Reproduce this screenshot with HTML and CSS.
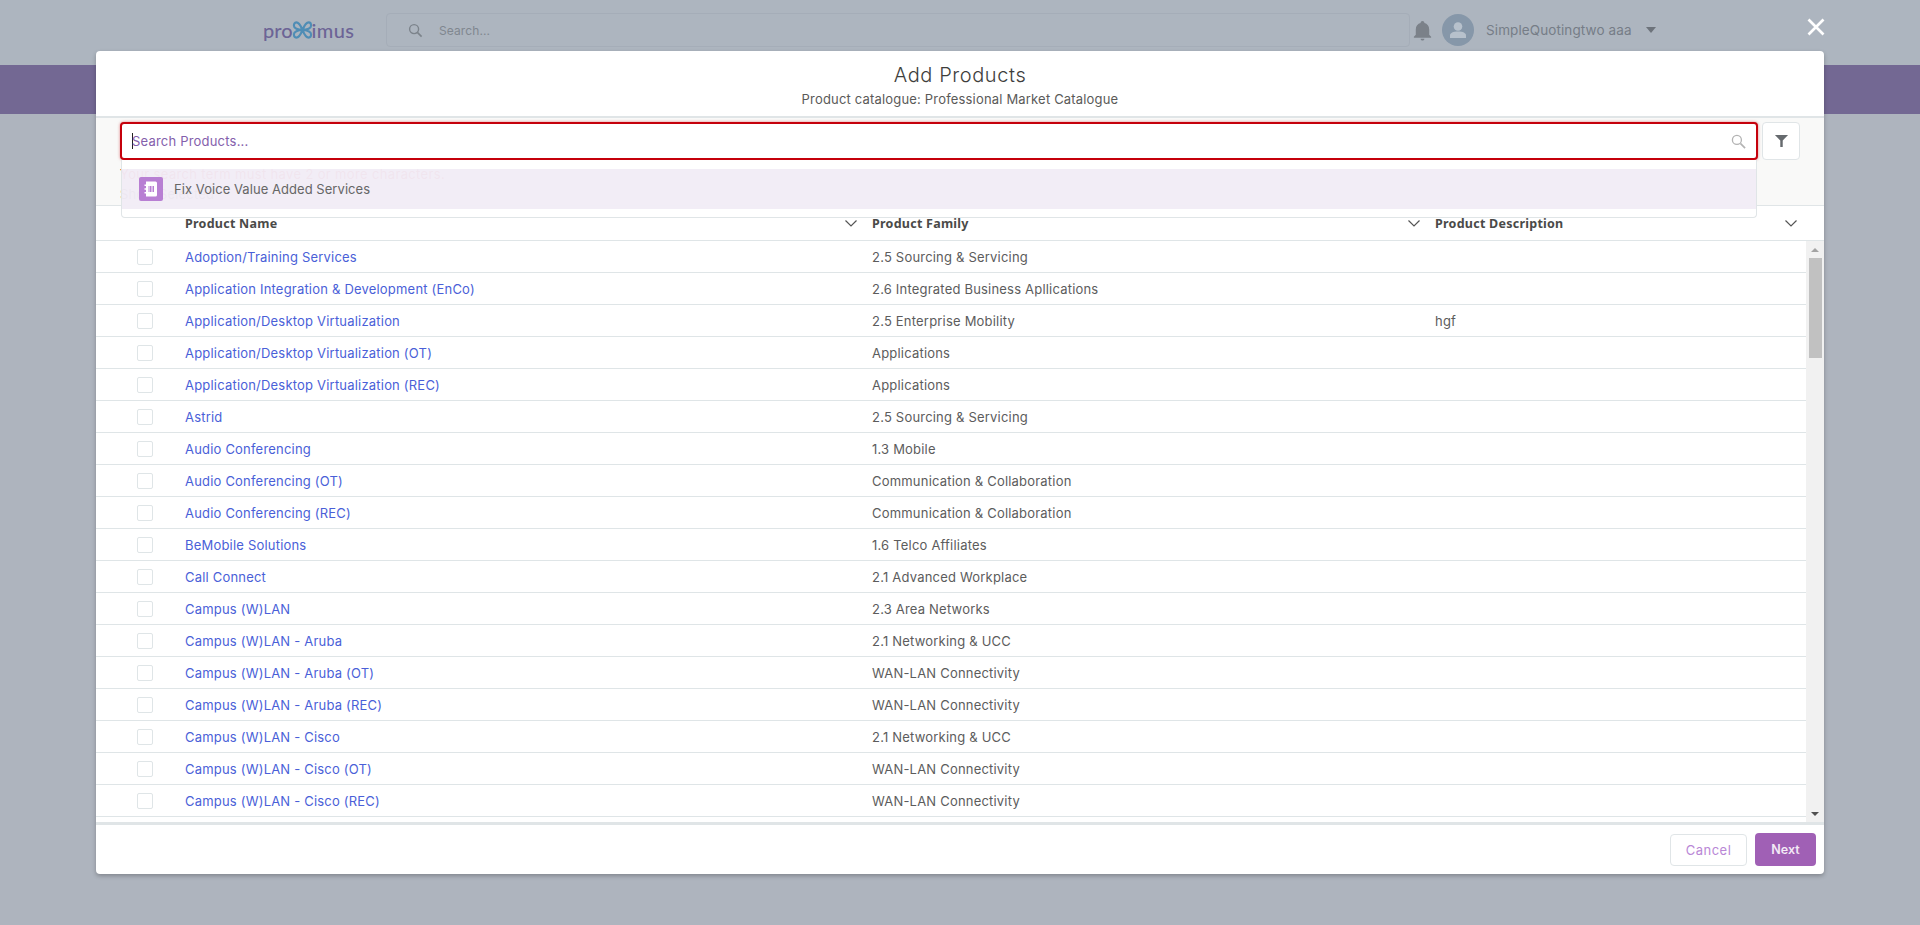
FILE: index.html
```html
<!DOCTYPE html>
<html lang="en">
<head>
<meta charset="utf-8">
<title>Add Products</title>
<link rel="stylesheet" href="styles.css">
</head>
<body>
<header class="topbar">
  <div class="logo">
    <span>pro</span>
    <svg class="logo-x" viewBox="0 0 22 20" width="21" height="20"><path d="M11 10C9 5 7 2 4.500 2 2.500 2 2 4 2 5.500 2 8 6 10 11 10c5 0 9 2 9 4.500 0 2-1 3.500-2.500 3.500C15 18 13 15 11 10zM11 10c2-5 4-8 6.500-8C19 2 20 3.500 20 5.500 20 8 16 10 11 10c-5 0-9 2-9 4.500C2 16.500 3 18 4.500 18 7 18 9 15 11 10z" fill="none" stroke="#4f8db5" stroke-width="2.200"/></svg>
    <span class="logo-end">imus</span>
  </div>
  <div class="global-search">
    <svg class="gs-icon" viewBox="0 0 16 16" width="15" height="15"><circle cx="6.500" cy="6.500" r="4.800" fill="none" stroke="#7c838b" stroke-width="1.500"/><path d="M10 10l4.500 4.500" stroke="#7c838b" stroke-width="1.800" fill="none"/></svg>
    <span>Search...</span>
  </div>
  <svg class="bell" viewBox="0 0 24 24" width="23" height="23"><path d="M12 22.500c1.100 0 2-.9 2-2h-4c0 1.100.9 2 2 2zm7-6v-5.500c0-3.500-2-6-5-6.700V4c0-1.100-.9-2-2-2s-2 .9-2 2v.3c-3 .7-5 3.200-5 6.700v5.500L3 18.500v1h18v-1l-2-2z" fill="#7b8189"/></svg>
  <svg class="avatar" viewBox="0 0 32 32" width="32" height="32"><circle cx="16" cy="16" r="16" fill="#8697a9"/><circle cx="16" cy="12.500" r="4.300" fill="#b7c1cc"/><path d="M8 21.500c0-2.500 3-4 8-4s8 1.500 8 4V24H8z" fill="#b7c1cc"/></svg>
  <span class="user">SimpleQuotingtwo aaa</span>
  <span class="user-caret"></span>
</header>
<div class="band"></div>

<button class="close" aria-label="Close">
  <svg viewBox="0 0 18 18" width="18" height="18"><path d="M1.500 1.500l15 15M16.500 1.500l-15 15" stroke="#fff" stroke-width="2.700" fill="none"/></svg>
</button>

<main class="modal">
  <div class="modal-head">
    <h1>Add Products</h1>
    <p>Product catalogue: Professional Market Catalogue</p>
  </div>
  <div class="toolbar">
    <div class="search-row">
      <div class="product-search">
        <i class="caret"></i>
        <input type="text" placeholder="Search Products...">
        <svg viewBox="0 0 16 16" width="15" height="15"><circle cx="6.300" cy="6.300" r="4.800" fill="none" stroke="#b3b3b3" stroke-width="1.400"/><path d="M10 10l5 5" stroke="#b3b3b3" stroke-width="1.800" fill="none"/></svg>
      </div>
      <button class="filter" aria-label="Filter">
        <svg viewBox="0 0 16 14" width="15" height="14"><path d="M1 .5h14L9.300 6.500V13.500H6.700V6.500z" fill="#666a6e"/></svg>
      </button>
    </div>
    <p class="ghost-error">Your search term must have 2 or more characters.</p>
    <p class="ghost-note">Show Selected</p>
    <div class="dropdown">
      <div class="option">
        <svg class="opt-icon" viewBox="0 0 24 24" width="24" height="24"><rect width="24" height="24" rx="2" fill="#b87fd3"/><path d="M7 4.500h9.500A1.500 1.500 0 0 1 18 6v12a1.500 1.500 0 0 1-1.500 1.500H7zM5.500 7.500h2v1.500h-2zM5.500 11.300h2v1.500h-2zM5.500 15h2v1.500h-2z" fill="#fff"/><path d="M10 9v6M11.500 9v6M13 9v6M14.500 9v6" stroke="#b87fd3" fill="none"/></svg>
        <span>Fix Voice Value Added Services</span>
      </div>
    </div>
  </div>
  <div class="grid-head">
    <div></div>
    <div class="th"><span>Product Name</span><svg viewBox="0 0 12 7" width="12" height="7"><path d="M.5.500L6 6l5.500-5.500" fill="none" stroke="#555" stroke-width="1.200"/></svg></div>
    <div class="th"><span>Product Family</span><svg viewBox="0 0 12 7" width="12" height="7"><path d="M.5.500L6 6l5.500-5.500" fill="none" stroke="#555" stroke-width="1.200"/></svg></div>
    <div class="th th-last"><span>Product Description</span><svg viewBox="0 0 12 7" width="12" height="7"><path d="M.5.500L6 6l5.500-5.500" fill="none" stroke="#555" stroke-width="1.200"/></svg></div>
  </div>
  <div class="grid-body">
    <div class="rows">
      <div class="row"><i class="check"></i><a>Adoption/Training Services</a><span>2.5 Sourcing &amp; Servicing</span><span></span></div>
      <div class="row"><i class="check"></i><a>Application Integration &amp; Development (EnCo)</a><span>2.6 Integrated Business Apllications</span><span></span></div>
      <div class="row"><i class="check"></i><a>Application/Desktop Virtualization</a><span>2.5 Enterprise Mobility</span><span>hgf</span></div>
      <div class="row"><i class="check"></i><a>Application/Desktop Virtualization (OT)</a><span>Applications</span><span></span></div>
      <div class="row"><i class="check"></i><a>Application/Desktop Virtualization (REC)</a><span>Applications</span><span></span></div>
      <div class="row"><i class="check"></i><a>Astrid</a><span>2.5 Sourcing &amp; Servicing</span><span></span></div>
      <div class="row"><i class="check"></i><a>Audio Conferencing</a><span>1.3 Mobile</span><span></span></div>
      <div class="row"><i class="check"></i><a>Audio Conferencing (OT)</a><span>Communication &amp; Collaboration</span><span></span></div>
      <div class="row"><i class="check"></i><a>Audio Conferencing (REC)</a><span>Communication &amp; Collaboration</span><span></span></div>
      <div class="row"><i class="check"></i><a>BeMobile Solutions</a><span>1.6 Telco Affiliates</span><span></span></div>
      <div class="row"><i class="check"></i><a>Call Connect</a><span>2.1 Advanced Workplace</span><span></span></div>
      <div class="row"><i class="check"></i><a>Campus (W)LAN</a><span>2.3 Area Networks</span><span></span></div>
      <div class="row"><i class="check"></i><a>Campus (W)LAN - Aruba</a><span>2.1 Networking &amp; UCC</span><span></span></div>
      <div class="row"><i class="check"></i><a>Campus (W)LAN - Aruba (OT)</a><span>WAN-LAN Connectivity</span><span></span></div>
      <div class="row"><i class="check"></i><a>Campus (W)LAN - Aruba (REC)</a><span>WAN-LAN Connectivity</span><span></span></div>
      <div class="row"><i class="check"></i><a>Campus (W)LAN - Cisco</a><span>2.1 Networking &amp; UCC</span><span></span></div>
      <div class="row"><i class="check"></i><a>Campus (W)LAN - Cisco (OT)</a><span>WAN-LAN Connectivity</span><span></span></div>
      <div class="row"><i class="check"></i><a>Campus (W)LAN - Cisco (REC)</a><span>WAN-LAN Connectivity</span><span></span></div>
    </div>
    <div class="scrollbar">
      <i class="arrow-up"></i>
      <i class="thumb"></i>
      <i class="arrow-down"></i>
    </div>
  </div>
  <div class="modal-foot">
    <button class="btn-cancel">Cancel</button>
    <button class="btn-next">Next</button>
  </div>
</main>
</body>
</html>
```
FILE: styles.css
```css
* { box-sizing: border-box; }
html, body { height: 100%; }
body {
  margin: 0;
  height: 925px;
  overflow: hidden;
  background: #aeb4be;
  font-family: Inter, "Open Sans", sans-serif;
  font-size: 13px;
  letter-spacing: .2px;
  color: #5c5c5c;
}
i { display: block; }
button { font-family: inherit; cursor: pointer; }

.topbar {
  height: 65px;
  display: flex;
  align-items: center;
  padding: 0 0 5px 263px;
  background: #adb5bf;
}
.logo {
  width: 123px;
  display: flex;
  align-items: center;
  font-family: Lato, sans-serif;
  font-size: 20px;
  font-weight: 500;
  letter-spacing: 0;
  color: #6c6496;
  line-height: 20px;
}
.logo-x { margin: 0 -1px; }
.logo-end { letter-spacing: .4px; }
.global-search {
  width: 1024px;
  height: 34px;
  display: flex;
  align-items: center;
  gap: 16px;
  padding-left: 21px;
  border: 1px solid #a5adb8;
  border-radius: 4px;
  background: #adb5bf;
  font-size: 12px;
  letter-spacing: .1px;
  color: #80878f;
}
.bell { margin-left: 1px; }
.avatar { margin-left: 8px; }
.user { margin-left: 12px; width: 160px; font-size: 13.500px; letter-spacing: .1px; color: #767d87; }
.user-caret {
  width: 0;
  height: 0;
  border-left: 5px solid transparent;
  border-right: 5px solid transparent;
  border-top: 6px solid #6d737b;
}
.band { height: 49px; background: #736893; }

.close {
  position: absolute;
  left: 1807px;
  top: 18px;
  padding: 0;
  border: 0;
  background: none;
  line-height: 0;
}

.modal {
  position: absolute;
  left: 96px;
  top: 51px;
  width: 1728px;
  height: 823px;
  display: flex;
  flex-direction: column;
  background: #fff;
  border-radius: 4px;
  box-shadow: 0 2px 4px rgba(0, 0, 0, .25);
}
.modal-head {
  height: 67px;
  flex: none;
  padding-top: 12px;
  text-align: center;
  border-bottom: 2px solid #e0e5e7;
}
.modal-head h1 {
  margin: 0;
  font-size: 20px;
  font-weight: 300;
  letter-spacing: .6px;
  line-height: 24px;
  color: #3e3e3c;
}
.modal-head p {
  margin: 3px 0 0;
  font-size: 13px;
  letter-spacing: .18px;
  line-height: 18px;
  color: #5a5a58;
}
.toolbar {
  position: relative;
  height: 88px;
  flex: none;
  padding: 4px 24px 0;
  background: #f9f9f8;
  border-bottom: 1px solid #e0e5e7;
}
.search-row { display: flex; gap: 4px; height: 38px; }
.product-search {
  width: 1638px;
  display: flex;
  align-items: center;
  padding: 0 10px;
  background: #fff;
  border: 2px solid #c5000b;
  border-radius: 4px;
  box-shadow: 0 0 3px rgba(197, 0, 11, .5);
}
.caret { width: 1px; height: 16px; background: #222; flex: none; }
.product-search input {
  flex: 1;
  min-width: 0;
  height: 30px;
  margin-left: -1px;
  padding: 0;
  border: 0;
  outline: 0;
  background: none;
  font: inherit;
  letter-spacing: .2px;
}
.product-search input::placeholder { color: #8460ac; opacity: 1; }
.filter {
  width: 38px;
  height: 38px;
  padding: 0;
  display: flex;
  align-items: center;
  justify-content: center;
  background: #fff;
  border: 1px solid #e0e5e7;
  border-radius: 4px;
}
.ghost-error { margin: 5px 0 0; line-height: 18px; letter-spacing: .35px; color: #c5000b; }
.ghost-note { margin: 2px 0 0; line-height: 18px; color: #555; }
.dropdown {
  position: absolute;
  z-index: 2;
  left: 25px;
  top: 42px;
  width: 1636px;
  height: 58px;
  padding-top: 9px;
  background: rgba(255, 255, 255, .97);
  border: 1px solid #e0e5e7;
  border-top: 0;
  border-radius: 0 0 4px 4px;
}
.option {
  height: 40px;
  display: flex;
  align-items: center;
  gap: 11px;
  padding-left: 17px;
  letter-spacing: .05px;
  color: #666;
  background: rgba(130, 80, 170, .1);
}

.grid-head,
.row {
  display: grid;
  grid-template-columns: 89px 687px 563px 1fr;
}
.grid-head {
  height: 35px;
  flex: none;
  align-items: center;
  padding-top: 1px;
  font-family: "Noto Sans", sans-serif;
  font-weight: 700;
  font-size: 12.500px;
  letter-spacing: .25px;
  color: #4a4a48;
  border-bottom: 1px solid #dfe5e7;
}
.th {
  display: flex;
  align-items: center;
  justify-content: space-between;
  padding: 0 15px 0 0;
}
.th-last { padding-right: 27px; }
.grid-body { flex: 1; min-height: 0; display: flex; overflow: hidden; }
.rows { flex: 1; min-width: 0; overflow: hidden; }
.row {
  height: 32px;
  align-items: center;
  border-bottom: 1px solid #dfe5e7;
}
.row a { color: #4a5fd8; }
.check {
  width: 16px;
  height: 16px;
  margin-left: 41px;
  background: #fff;
  border: 1px solid #dfe5e7;
  border-radius: 2px;
}
.scrollbar {
  width: 18px;
  flex: none;
  display: flex;
  flex-direction: column;
  align-items: center;
  background: #f1f1f1;
}
.arrow-up {
  margin-top: 7px;
  border-left: 4px solid transparent;
  border-right: 4px solid transparent;
  border-bottom: 4px solid #a3a3a3;
}
.thumb { width: 13px; height: 100px; margin-top: 6px; background: #c1c1c1; }
.arrow-down {
  margin-top: auto;
  margin-bottom: 6px;
  border-left: 4px solid transparent;
  border-right: 4px solid transparent;
  border-top: 4px solid #505050;
}
.modal-foot {
  height: 52px;
  flex: none;
  display: flex;
  justify-content: flex-end;
  align-items: center;
  gap: 8px;
  padding: 0 8px;
  border-top: 3px solid #e0e5e7;
  border-radius: 0 0 4px 4px;
}
.btn-cancel {
  width: 77px;
  height: 32px;
  padding: 0;
  background: #fff;
  border: 1px solid #e0e5e7;
  border-radius: 4px;
  font-size: 13px;
  letter-spacing: .5px;
  color: #b987d6;
}
.btn-next {
  width: 61px;
  height: 33px;
  padding: 0;
  background: #a060b5;
  border: 0;
  border-radius: 4px;
  font-size: 12.500px;
  font-weight: 600;
  letter-spacing: 0;
  color: #f3eaf6;
}
```
